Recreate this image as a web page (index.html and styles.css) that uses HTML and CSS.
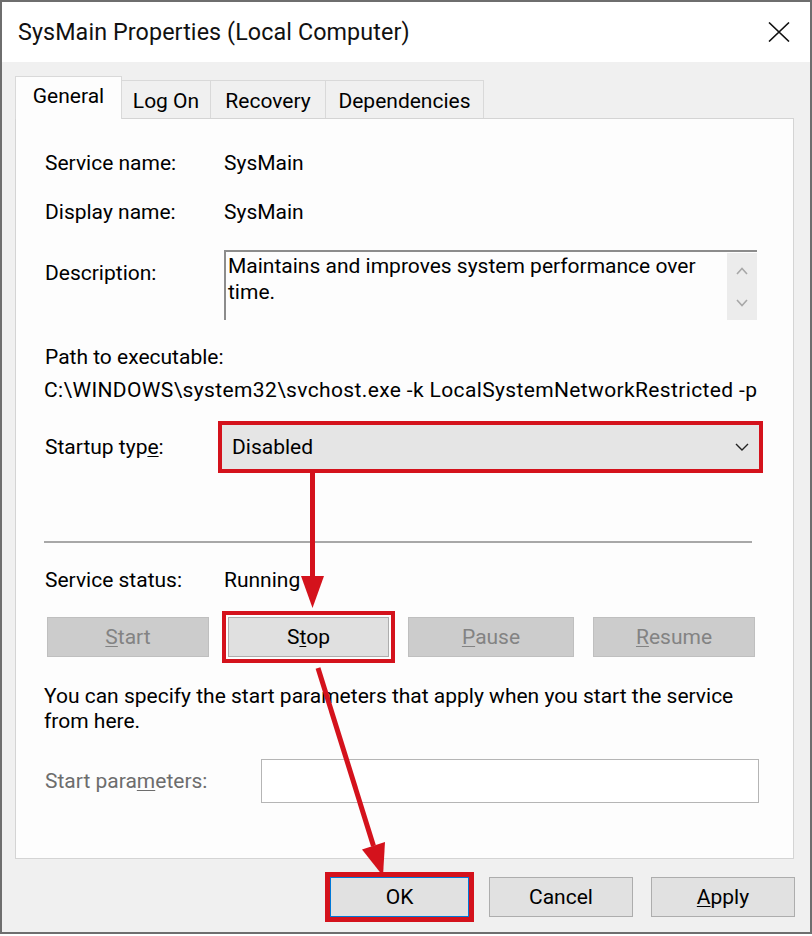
FILE: index.html
```html
<!DOCTYPE html>
<html>
<head>
<meta charset="utf-8">
<title>SysMain Properties</title>
<link rel="stylesheet" href="styles.css">
</head>
<body>
<div class="window">
  <div class="titlebar">
    <span class="title">SysMain Properties (Local Computer)</span>
    <svg class="close" width="22" height="20" viewBox="0 0 22 20"><path d="M1 0.5 L21 19.5 M21 0.5 L1 19.5" stroke="#111" stroke-width="1.6" fill="none"/></svg>
  </div>
  <div class="body">
    <div class="tabs">
      <div class="tab active tab-general">General</div>
      <div class="tab tab-logon">Log On</div>
      <div class="tab tab-recovery">Recovery</div>
      <div class="tab tab-deps">Dependencies</div>
    </div>
    <div class="panel">
      <div class="row r-name"><span>Service name:</span><span>SysMain</span></div>
      <div class="row r-display"><span>Display name:</span><span>SysMain</span></div>
      <div class="row r-desc">
        <span class="desc-label">Description:</span>
        <div class="desc-box">
          <div class="desc-text">Maintains and improves system performance over time.</div>
          <div class="desc-scroll">
            <svg width="12" height="8" viewBox="0 0 12 8"><path d="M1 7 L6 1.5 L11 7" stroke="#a8a8a8" stroke-width="1.6" fill="none"/></svg>
            <svg width="12" height="8" viewBox="0 0 12 8"><path d="M1 1 L6 6.5 L11 1" stroke="#a8a8a8" stroke-width="1.6" fill="none"/></svg>
          </div>
        </div>
      </div>
      <div class="path-label">Path to executable:</div>
      <div class="path-value">C:\WINDOWS\system32\svchost.exe -k LocalSystemNetworkRestricted -p</div>
      <div class="row r-startup">
        <span>Startup typ<u>e</u>:</span>
        <div class="select highlight">
          <span>Disabled</span>
          <svg width="14" height="8" viewBox="0 0 14 8"><path d="M1 1 L7 7 L13 1" stroke="#222" stroke-width="1.4" fill="none"/></svg>
        </div>
      </div>
      <div class="separator"></div>
      <div class="row r-status"><span>Service status:</span><span>Running</span></div>
      <div class="svc-buttons">
        <div class="btn disabled"><u>S</u>tart</div>
        <div class="btn stop highlight">S<u>t</u>op</div>
        <div class="btn disabled"><u>P</u>ause</div>
        <div class="btn disabled"><u>R</u>esume</div>
      </div>
      <p class="hint">You can specify the start parameters that apply when you start the service from here.</p>
      <div class="row r-params">
        <span class="muted">Start para<u>m</u>eters:</span>
        <div class="input"></div>
      </div>
    </div>
    <div class="actions">
      <div class="btn ok highlight">OK</div>
      <div class="btn cancel">Cancel</div>
      <div class="btn apply"><u>A</u>pply</div>
    </div>
  </div>
  <svg class="arrows" width="812" height="936" viewBox="0 0 812 936">
    <line x1="312.5" y1="472" x2="312.5" y2="580" stroke="#d4121c" stroke-width="5"/>
    <polygon points="301,576 324,576 312.5,608" fill="#d4121c"/>
    <line x1="318" y1="668" x2="373.5" y2="846" stroke="#d4121c" stroke-width="5"/>
    <polygon points="385,842 362,849.5 383,876" fill="#d4121c"/>
  </svg>
</div>
</body>
</html>
```
FILE: styles.css
```css
* { box-sizing: border-box; }
html, body { margin: 0; padding: 0; background: #ffffff; }
body {
  font-family: Roboto, "Liberation Sans", Arial, sans-serif;
  font-size: 21px;
  color: #000;
}
u { text-decoration: underline; text-underline-offset: 2px; text-decoration-thickness: 1px; }

.window {
  position: relative;
  width: 812px;
  height: 934px;
  border: 2px solid #6e6e6e;
  background: #f0f0f0;
  display: flex;
  flex-direction: column;
}

.titlebar {
  height: 60px;
  background: #ffffff;
  display: flex;
  align-items: center;
  justify-content: space-between;
  padding-left: 16px;
  padding-right: 20px;
}
.title { font-size: 23.3px; color: #111; letter-spacing: 0.1px; }
.close { display: block; }

.body {
  flex: 1;
  background: #f0f0f0;
  padding: 14px 15px 0 13px;
  display: flex;
  flex-direction: column;
}

.tabs {
  display: flex;
  align-items: flex-end;
  height: 42px;
}
.tab {
  height: 38px;
  background: #f0f0f0;
  border: 1px solid #d9d9d9;
  border-left: none;
  border-bottom: none;
  display: flex;
  align-items: center;
  justify-content: center;
  font-size: 21px;
  padding-top: 2px;
}
.tab.active {
  position: relative;
  z-index: 1;
  height: 43px;
  margin-bottom: -1px;
  background: #fdfdfd;
  border-left: 1px solid #d9d9d9;
  padding-top: 0;
  padding-bottom: 4px;
}
.tab-general { width: 107px; }
.tab-logon { width: 89px; }
.tab-recovery { width: 115px; }
.tab-deps { width: 158px; }

.panel {
  width: 779px;
  height: 741px;
  background: #fdfdfd;
  border: 1px solid #d4d4d4;
  padding: 32px 34px 0 29px;
}

.row {
  display: grid;
  grid-template-columns: 179px 1fr;
  align-items: center;
  line-height: 24px;
}
.r-display { margin-top: 25px; }
.r-desc { margin-top: 26px; align-items: start; }
.desc-label { margin-top: 11px; }
.desc-box {
  height: 70px;
  border-top: 2px solid #8c8c8c;
  border-left: 2px solid #8c8c8c;
  background: #fdfdfd;
  display: flex;
  margin-right: 2px;
}
.desc-text {
  flex: 1;
  line-height: 26px;
  padding: 1px 8px 0 2px;
}
.desc-scroll {
  width: 30px;
  margin: 1px 0 0 0;
  background: #ececec;
  display: flex;
  flex-direction: column;
  align-items: center;
  justify-content: space-between;
  padding: 14px 0 13px;
}
.desc-scroll svg { display: block; }

.path-label { margin-top: 25px; line-height: 24px; }
.path-value { margin-top: 9px; line-height: 24px; margin-left: -1px; white-space: nowrap; letter-spacing: 0.36px; }

.r-startup { margin-top: 23px; }
.select {
  height: 44px;
  margin-left: -2px;
  background: #e5e5e5;
  display: flex;
  align-items: center;
  justify-content: space-between;
  padding: 0 10px 0 10px;
}
.select svg { display: block; }

.highlight { outline: 4px solid #d4121c; outline-offset: 0; }

.separator {
  margin-top: 72px;
  height: 2px;
  background: #a8a8a8;
  margin-left: -1px;
  margin-right: 7px;
}

.r-status { margin-top: 25px; }

.svc-buttons {
  margin-top: 25px;
  margin-left: 2px;
  display: flex;
  gap: 19px;
}
.svc-buttons .btn:nth-child(1) { width: 162px; }
.svc-buttons .btn:nth-child(2) { width: 161px; }
.svc-buttons .btn:nth-child(3) { width: 166px; }
.svc-buttons .btn:nth-child(4) { width: 162px; }
.btn {
  height: 40px;
  display: flex;
  align-items: center;
  justify-content: center;
  background: #e1e1e1;
  border: 1px solid #adadad;
  font-size: 21px;
}
.btn.disabled {
  background: #cccccc;
  border-color: #bfbfbf;
  color: #838383;
}
.btn.stop { outline-offset: 2px; background: #e0e0e0; }

.hint {
  margin: 27px 0 0 -1px;
  line-height: 25px;
  font-size: 21px;
}

.r-params {
  margin-top: 25px;
  grid-template-columns: 216px 1fr;
}
.muted { color: #6d6d6d; }
.input {
  height: 44px;
  border: 1px solid #b5b5b5;
  background: #ffffff;
}

.actions {
  margin-top: 18px;
  display: flex;
  justify-content: flex-end;
  align-items: center;
}
.actions .btn { height: 40px; }
.btn.ok {
  width: 139px;
  margin-right: 20px;
  outline-width: 5px;
  border-color: #0078d7;
}
.btn.cancel { width: 144px; margin-right: 18px; }
.btn.apply { width: 144px; }

.arrows {
  position: absolute;
  top: -2px;
  left: -2px;
  pointer-events: none;
}
```
